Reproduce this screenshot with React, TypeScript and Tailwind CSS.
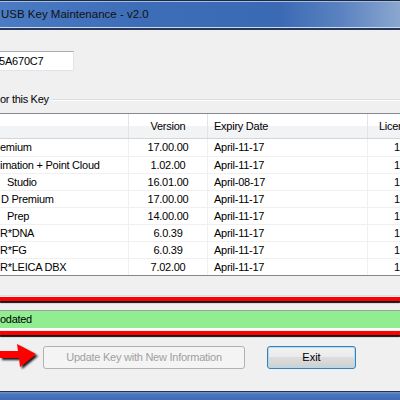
const rows = [
  { name: "emium", pad: "pl-0", version: "17.00.00", expiry: "April-11-17", lic: "1" },
  { name: "imation + Point Cloud", pad: "pl-0", version: "1.02.00", expiry: "April-11-17", lic: "1" },
  { name: "Studio", pad: "pl-[7px]", version: "16.01.00", expiry: "April-08-17", lic: "1" },
  { name: "D Premium", pad: "pl-[1px]", version: "17.00.00", expiry: "April-11-17", lic: "1" },
  { name: "Prep", pad: "pl-[7px]", version: "14.00.00", expiry: "April-11-17", lic: "1" },
  { name: "R*DNA", pad: "pl-0", version: "6.0.39", expiry: "April-11-17", lic: "1" },
  { name: "R*FG", pad: "pl-0", version: "6.0.39", expiry: "April-11-17", lic: "1" },
  { name: "R*LEICA DBX", pad: "pl-0", version: "7.02.00", expiry: "April-11-17", lic: "1" },
]

function Arrow() {
  return (
    <svg width="43" height="28" viewBox="0 0 43 28" className="-mt-[4px] shrink-0">
      <defs>
        <filter id="arrowShadow" x="-20%" y="-20%" width="150%" height="160%">
          <feDropShadow dx="2" dy="2" stdDeviation="1.2" floodColor="#000" floodOpacity="0.9" />
        </filter>
      </defs>
      <polygon
        points="0,9 18,9 17,2 36,12 20,25 19,16 0,16"
        fill="#ff0000"
        filter="url(#arrowShadow)"
      />
    </svg>
  )
}

export default function App() {
  return (
    <div className="w-[400px] h-[400px] overflow-hidden bg-[#f0f0f0] flex flex-col font-['Liberation_Sans',Arial,sans-serif] text-black">
      {/* title bar */}
      <div className="h-[30px] shrink-0 flex flex-col border-t border-[#1c2940]">
        <div className="flex-1 flex items-center border-t border-[#a4bde3] border-b border-b-[#cfdbee] bg-[linear-gradient(to_right,#4a7bc3_0%,#3d6db7_35%,#3b6ab4_70%,#5a82c0_85%,#8aa7cf_100%)]">
          <span className="text-[11.5px] text-[#111] leading-none pl-[1px]">USB Key Maintenance - v2.0</span>
        </div>
        <div className="h-[2px] bg-[#27375a]" />
      </div>

      {/* key id */}
      <div className="mt-[21px] -ml-[8px]">
        <div className="w-[82px] h-[20px] bg-white border border-[#dfe5ec] border-t-[#abadb3] flex items-center pl-[6px]">
          <span className="text-[11px] tracking-[-0.2px]">5A670C7</span>
        </div>
      </div>

      {/* group box label */}
      <div className="mt-[22px] h-[13px] flex items-center">
        <span className="text-[11px] tracking-[-0.3px] leading-none whitespace-nowrap">or this Key</span>
        <div className="flex-1 ml-[3px] flex flex-col">
          <div className="h-px bg-[#d5dfe5]" />
          <div className="h-px bg-white" />
        </div>
      </div>

      {/* list */}
      <div className="mt-[7px] bg-white border-t border-b border-[#828790] text-[11px] tracking-[-0.25px]">
        <div className="flex h-[25px] border-b border-[#d5d5d5] bg-[linear-gradient(#ffffff_0%,#ffffff_48%,#f2f3f5_52%,#f2f3f5_100%)]">
          <div className="w-[129px] shrink-0 border-r border-[#e3e4e6]" />
          <div className="w-[79px] shrink-0 border-r border-[#e3e4e6] flex items-center justify-center">Version</div>
          <div className="w-[160px] shrink-0 border-r border-[#e3e4e6] flex items-center pl-[6px]">Expiry Date</div>
          <div className="w-[58px] shrink-0 flex items-center justify-center">License</div>
        </div>
        {rows.map((r, i) => (
          <div key={i} className={`flex h-[17px] ${i > 0 ? "border-t border-[#f0f0f0]" : ""}`}>
            <div className={`w-[129px] shrink-0 border-r border-[#f0f0f0] flex items-center whitespace-nowrap overflow-hidden ${r.pad}`}>
              {r.name}
            </div>
            <div className="w-[79px] shrink-0 border-r border-[#f0f0f0] flex items-center justify-center">{r.version}</div>
            <div className="w-[160px] shrink-0 border-r border-[#f0f0f0] flex items-center pl-[6px]">{r.expiry}</div>
            <div className="w-[58px] shrink-0 flex items-center justify-center">{r.lic}</div>
          </div>
        ))}
      </div>

      {/* group box bottom + annotation */}
      <div className="mt-[19px] h-px bg-[#d5dfe5]" />
      <div className="mt-[1px] h-[4px] bg-[#ff0000] shadow-[0_2px_1px_rgba(0,0,0,0.95)]" />

      {/* status */}
      <div className="mt-[9px] border-t border-[#a0a0a0] border-b-2 border-b-white">
        <div className="h-[17px] bg-[#90ee90] flex items-center text-[11px] tracking-[-0.3px]">odated</div>
      </div>
      <div className="mt-[1px] h-[4px] bg-[#ff0000] shadow-[0_2px_1px_rgba(0,0,0,0.95)]" />

      {/* buttons */}
      <div className="mt-[11px] flex items-start">
        <Arrow />
        <button
          disabled
          className="w-[202px] h-[23px] rounded-[3px] border border-[#adb2b5] bg-[#f4f4f4] text-[11px] tracking-[-0.25px] text-[#a0a0a0]"
        >
          Update Key with New Information
        </button>
        <button className="ml-[22px] w-[89px] h-[23px] rounded-[3px] border border-[#3c7fb1] shadow-[inset_0_0_0_1px_#a8dcf8] bg-[linear-gradient(#f2f2f2_0%,#ebebeb_45%,#dddddd_50%,#cfcfcf_100%)] text-[11px] text-black">
          Exit
        </button>
      </div>

      {/* bottom frame */}
      <div className="mt-auto h-[9px] shrink-0 border-t border-[#26355a] bg-[linear-gradient(#6f93cc_0%,#4a76bc_30%,#3e6bb4_100%)]" />
    </div>
  )
}
